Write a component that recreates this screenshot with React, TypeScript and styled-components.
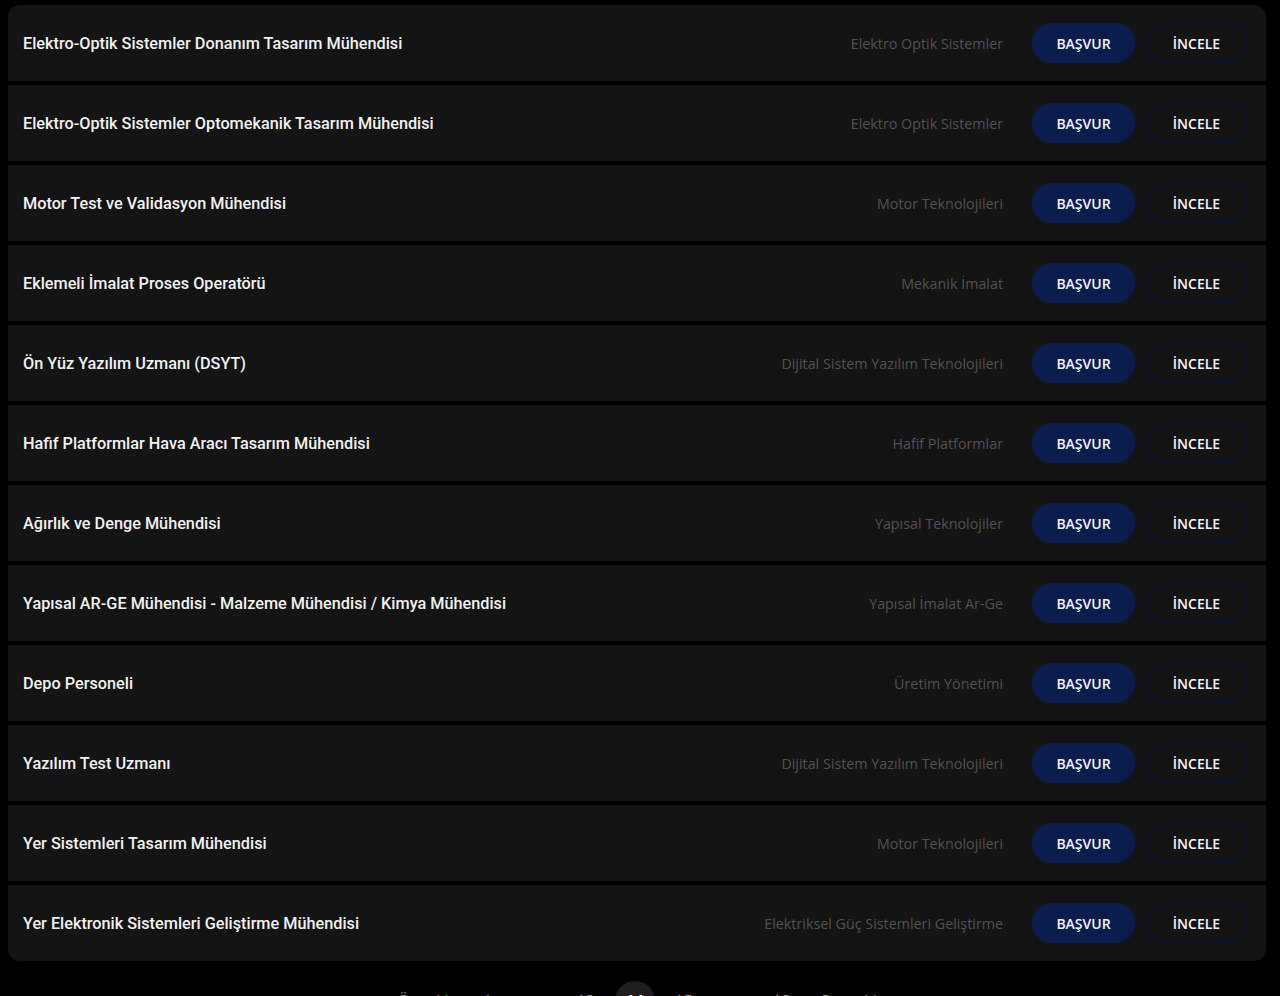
import React from "react";
import styled, { createGlobalStyle } from "styled-components";

const GlobalStyle = createGlobalStyle`
  html, body {
    margin: 0;
    padding: 0;
    background: #000;
  }
  body {
    font-family: "Open Sans", "Noto Sans", sans-serif;
    color: #fff;
    overflow: hidden;
  }
`;

type Job = { title: string; dept: string };

const jobs: Job[] = [
  { title: "Elektro-Optik Sistemler Donanım Tasarım Mühendisi", dept: "Elektro Optik Sistemler" },
  { title: "Elektro-Optik Sistemler Optomekanik Tasarım Mühendisi", dept: "Elektro Optik Sistemler" },
  { title: "Motor Test ve Validasyon Mühendisi", dept: "Motor Teknolojileri" },
  { title: "Eklemeli İmalat Proses Operatörü", dept: "Mekanik İmalat" },
  { title: "Ön Yüz Yazılım Uzmanı (DSYT)", dept: "Dijital Sistem Yazılım Teknolojileri" },
  { title: "Hafif Platformlar Hava Aracı Tasarım Mühendisi", dept: "Hafif Platformlar" },
  { title: "Ağırlık ve Denge Mühendisi", dept: "Yapısal Teknolojiler" },
  { title: "Yapısal AR-GE Mühendisi - Malzeme Mühendisi / Kimya Mühendisi", dept: "Yapısal İmalat Ar-Ge" },
  { title: "Depo Personeli", dept: "Üretim Yönetimi" },
  { title: "Yazılım Test Uzmanı", dept: "Dijital Sistem Yazılım Teknolojileri" },
  { title: "Yer Sistemleri Tasarım Mühendisi", dept: "Motor Teknolojileri" },
  { title: "Yer Elektronik Sistemleri Geliştirme Mühendisi", dept: "Elektriksel Güç Sistemleri Geliştirme" },
];

const Page = styled.main`
  padding: 5px 14px 0 8px;
`;

const List = styled.ul`
  list-style: none;
  margin: 0;
  padding: 0;
  display: flex;
  flex-direction: column;
  gap: 4px;
  border-radius: 12px;
  overflow: hidden;
`;

const Row = styled.li`
  height: 76px;
  background: #141414;
  display: flex;
  align-items: center;
  padding: 0 18px 0 15px;
`;

const Title = styled.span`
  flex: 1;
  font-family: Roboto, "Noto Sans", sans-serif;
  font-weight: 500;
  font-size: 16.25px;
  color: #f2f2f2;
`;

const Dept = styled.span`
  font-size: 14.3px;
  color: #525252;
  margin-right: 29px;
`;

const Actions = styled.div`
  display: flex;
  gap: 10px;
`;

const Pill = styled.button<{ $filled?: boolean }>`
  width: 103px;
  height: 40px;
  border-radius: 20px;
  font-family: "Open Sans", "Noto Sans", sans-serif;
  font-weight: 600;
  font-size: 14px;
  color: #f4f4f4;
  cursor: pointer;
  background: ${(p) => (p.$filled ? "#0b1d4f" : "transparent")};
  border: 2px solid ${(p) => (p.$filled ? "#0b1d4f" : "#0e1530")};
`;

const Pager = styled.nav`
  display: flex;
  justify-content: center;
  align-items: center;
  gap: 9px;
  margin-top: 20px;
  font-size: 16px;
  color: #9a9a9a;
`;

const PageItem = styled.span<{ $active?: boolean; $wide?: boolean }>`
  min-width: 40px;
  height: 40px;
  display: inline-flex;
  align-items: center;
  justify-content: center;
  border-radius: 20px;
  padding: ${(p) => (p.$wide ? "0 10px" : "0")};
  background: ${(p) => (p.$active ? "#1e1e1e" : "transparent")};
  color: ${(p) => (p.$active ? "#fff" : "#9a9a9a")};
  font-weight: ${(p) => (p.$active ? 700 : 400)};
`;

export default function App() {
  return (
    <>
      <GlobalStyle />
      <Page>
        <List>
          {jobs.map((j, i) => (
            <Row key={i}>
              <Title>{j.title}</Title>
              <Dept>{j.dept}</Dept>
              <Actions>
                <Pill $filled>BAŞVUR</Pill>
                <Pill>İNCELE</Pill>
              </Actions>
            </Row>
          ))}
        </List>
        <Pager>
          <PageItem $wide>« Önceki</PageItem>
          <PageItem>1</PageItem>
          <PageItem>...</PageItem>
          <PageItem>13</PageItem>
          <PageItem $active>14</PageItem>
          <PageItem>15</PageItem>
          <PageItem>...</PageItem>
          <PageItem>18</PageItem>
          <PageItem $wide>Sonraki »</PageItem>
        </Pager>
      </Page>
    </>
  );
}
